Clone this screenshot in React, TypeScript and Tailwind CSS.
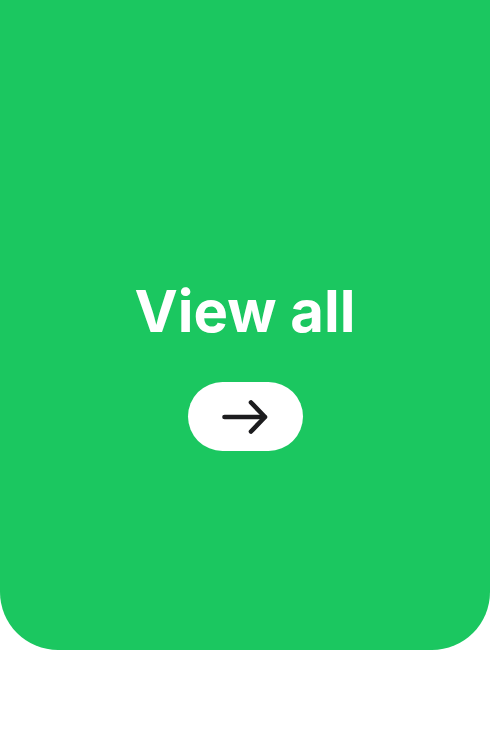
export default function App() {
  return (
    <div className="w-[490px] h-[739px] bg-white overflow-hidden" style={{ fontFamily: 'Inter, "Noto Sans", sans-serif' }}>
      <div className="w-full h-[650px] bg-[#1bc760] rounded-b-[58px] flex flex-col items-center pt-[282px]">
        <h2 className="text-[58px] leading-none font-bold text-white">View all</h2>
        <button className="mt-[42px] w-[115px] h-[69px] rounded-full bg-white flex items-center justify-center">
          <svg width="46" height="34" viewBox="0 0 46 34" fill="none" stroke="#1c1c1e" strokeWidth="4.6" strokeLinecap="round" strokeLinejoin="round">
            <path d="M2.5 17h40" />
            <path d="M29 2.5l14 14.5L29 31.5" />
          </svg>
        </button>
      </div>
    </div>
  )
}
